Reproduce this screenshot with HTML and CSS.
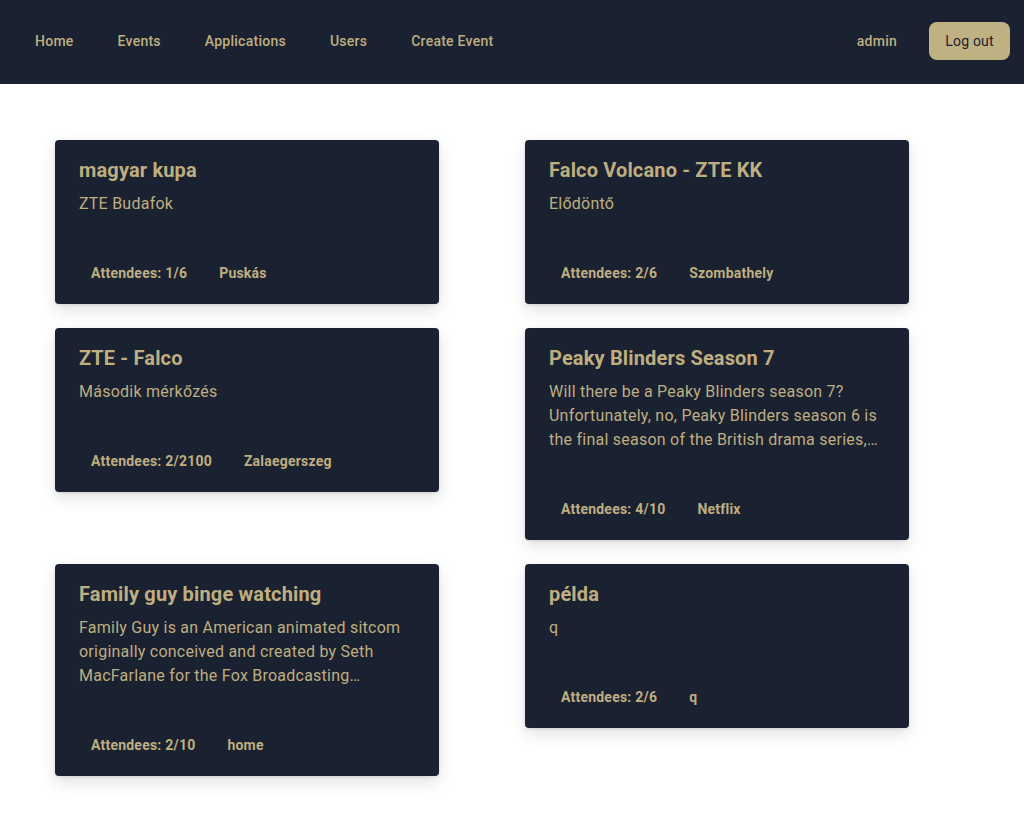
FILE: index.html
```html
<!DOCTYPE html>
<html lang="hu">
<head>
<meta charset="utf-8">
<title>Events</title>
<link rel="stylesheet" href="styles.css">
</head>
<body>
<header class="nav">
  <nav class="nav-links">
    <a class="nav-link" href="#">Home</a>
    <a class="nav-link" href="#">Events</a>
    <a class="nav-link" href="#">Applications</a>
    <a class="nav-link" href="#">Users</a>
    <a class="nav-link" href="#">Create Event</a>
  </nav>
  <div class="nav-right">
    <span class="nav-user">admin</span>
    <button class="logout">Log out</button>
  </div>
</header>
<main class="grid">
  <article class="card">
    <h2 class="card-title">magyar kupa</h2>
    <p class="card-desc">ZTE Budafok</p>
    <div class="card-footer"><span>Attendees: 1/6</span><span>Puskás</span></div>
  </article>
  <article class="card">
    <h2 class="card-title">Falco Volcano - ZTE KK</h2>
    <p class="card-desc">Elődöntő</p>
    <div class="card-footer"><span>Attendees: 2/6</span><span>Szombathely</span></div>
  </article>
  <article class="card">
    <h2 class="card-title">ZTE - Falco</h2>
    <p class="card-desc">Második mérkőzés</p>
    <div class="card-footer"><span>Attendees: 2/2100</span><span>Zalaegerszeg</span></div>
  </article>
  <article class="card">
    <h2 class="card-title">Peaky Blinders Season 7</h2>
    <p class="card-desc">Will there be a Peaky Blinders season 7? Unfortunately, no, Peaky Blinders season 6 is the final season of the British drama series, which has been running since 2013.</p>
    <div class="card-footer"><span>Attendees: 4/10</span><span>Netflix</span></div>
  </article>
  <article class="card">
    <h2 class="card-title">Family guy binge watching</h2>
    <p class="card-desc">Family Guy is an American animated sitcom originally conceived and created by Seth MacFarlane for the Fox Broadcasting Company.</p>
    <div class="card-footer"><span>Attendees: 2/10</span><span>home</span></div>
  </article>
  <article class="card">
    <h2 class="card-title">példa</h2>
    <p class="card-desc">q</p>
    <div class="card-footer"><span>Attendees: 2/6</span><span>q</span></div>
  </article>
</main>
</body>
</html>
```
FILE: styles.css
```css
* { box-sizing: border-box; }
body {
  margin: 0;
  background: #ffffff;
  font-family: Roboto, "Noto Sans", sans-serif;
  color: #bfae80;
}
.nav {
  height: 84px;
  background: #1a2131;
  display: flex;
  align-items: center;
  justify-content: space-between;
  padding: 0 14px 2px 35px;
}
.nav-links {
  display: flex;
  gap: 44px;
}
.nav-link {
  color: #bfae80;
  text-decoration: none;
  font-size: 14px;
  font-weight: 500;
  letter-spacing: 0.25px;
}
.nav-right {
  display: flex;
  align-items: center;
  gap: 32px;
}
.nav-user {
  font-size: 14px;
  font-weight: 500;
  letter-spacing: 0.25px;
}
.logout {
  height: 38px;
  width: 81px;
  border: none;
  border-radius: 8px;
  background: #c0b182;
  color: #1a2131;
  font-family: Roboto, "Noto Sans", sans-serif;
  font-size: 14px;
  letter-spacing: 0.2px;
  padding: 0;
}
.grid {
  display: grid;
  grid-template-columns: 384px 384px;
  column-gap: 86px;
  row-gap: 24px;
  padding: 56px 0 40px 55px;
  align-items: start;
}
.card {
  background: #1a2131;
  border-radius: 4px;
  padding: 16px 24px 21px;
  box-shadow: 0 6px 16px rgba(0, 0, 0, 0.12), 0 1px 3px rgba(0, 0, 0, 0.1);
}
.card-title {
  margin: 0 0 8px;
  font-size: 20px;
  line-height: 28px;
  font-weight: 700;
  letter-spacing: 0.15px;
}
.card-desc {
  margin: 0;
  font-size: 16px;
  line-height: 24px;
  letter-spacing: 0.24px;
  display: -webkit-box;
  -webkit-line-clamp: 3;
  -webkit-box-orient: vertical;
  overflow: hidden;
}
.card-footer {
  margin-top: 47px;
  padding-left: 12px;
  display: flex;
  gap: 32px;
  font-size: 14px;
  line-height: 20px;
  font-weight: 700;
  letter-spacing: 0.22px;
}
```
